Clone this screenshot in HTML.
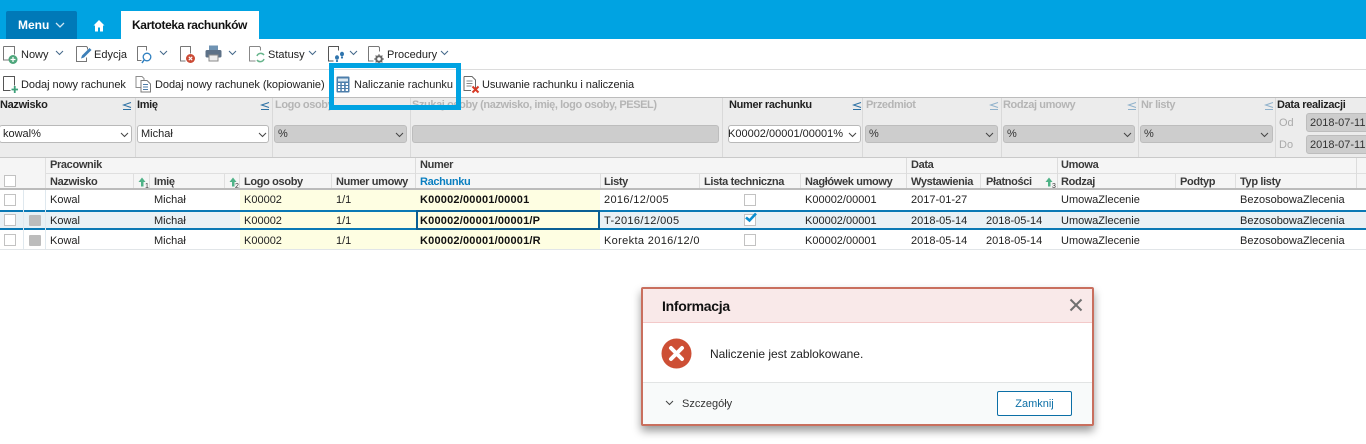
<!DOCTYPE html>
<html><head><meta charset="utf-8"><style>
html,body{margin:0;padding:0}
body{width:1366px;height:444px;overflow:hidden;background:#fff;position:relative;font-family:"Liberation Sans",sans-serif;font-size:11px;color:#222}
.a,.t,svg{position:absolute}
.t{white-space:nowrap;line-height:14px;height:14px}
.b{font-weight:bold}
.l{font-weight:bold;color:#222;letter-spacing:-.33px}
.r{font-weight:bold;color:#111;letter-spacing:.2px}
.h{font-weight:bold;color:#3a3a3a;letter-spacing:-.35px}
.g{font-weight:bold;color:#b5b5b5;letter-spacing:-.4px}
.n{letter-spacing:.35px}
.sub{font-size:7px;line-height:7px;height:7px;color:#333}
.s{position:absolute;height:16px;border:1px solid #b9b9b9;border-radius:3px;background:#fff;line-height:16px;white-space:nowrap;overflow:hidden;box-sizing:content-box;color:#222}
.s.d{background:#cdcdcd;border-color:#bdbdbd;color:#333}
.s span{position:absolute;left:3px;top:0}
.v{position:absolute;background:#d9d9d9;width:1px}
.c{position:absolute;width:10px;height:10px;border:1px solid #c2c2c2;background:#fff}
</style></head><body>
<!-- top bar -->
<div class="a" style="left:0;top:0;width:1366px;height:39px;background:#00a3e2"></div>
<div class="a" style="left:6px;top:11px;width:71px;height:28px;background:#0079b8;border-radius:2px 2px 0 0"></div>
<div class="t b" style="left:18px;top:18px;color:#fff;font-size:12px">Menu</div>
<svg style="left:55px;top:22px" width="10" height="6"><path d="M1 1l4 4 4-4" fill="none" stroke="#cfe6f3" stroke-width="1.3"/></svg>
<svg style="left:93px;top:19px" width="12" height="13"><path d="M6 1L0.500 6.500H2V12.500H5V8.500H7V12.500H10V6.500H11.500Z" fill="#fff"/></svg>
<div class="a" style="left:121px;top:11px;width:138px;height:28px;background:#fff"></div>
<div class="t b" style="left:132px;top:18px;color:#111;font-size:12px;letter-spacing:-.37px">Kartoteka rachunków</div>

<!-- toolbar 1 -->
<svg style="left:2px;top:44px" width="18" height="20"><path d="M1.500 2.500h11v8M1.500 2.500v13.500h6" fill="none" stroke="#777"/><circle cx="11" cy="15.500" r="4.500" fill="#4ea77c"/><path d="M8.500 15.500h5M11 13v5" stroke="#fff" stroke-width="1.200"/></svg>
<div class="t" style="left:21px;top:48px">Nowy</div>
<svg style="left:55px;top:50px" width="9" height="6"><path d="M1 1l3.500 3.500L8 1" fill="none" stroke="#44688a" stroke-width="1"/></svg>
<svg style="left:75px;top:44px" width="19" height="20"><path d="M1.500 2.500h10l1 1v2M1.500 2.500v15h10v-4" fill="none" stroke="#777"/><path d="M6 14.500l1-3 7.500-7.500 2 2L9 13.500z" fill="#3d7fb8"/></svg>
<div class="t" style="left:94px;top:48px">Edycja</div>
<svg style="left:136px;top:44px" width="18" height="20"><path d="M1.500 2.500h9v4M1.500 2.500v14h4" fill="none" stroke="#777"/><circle cx="11" cy="13" r="3.800" fill="none" stroke="#2e7fc0" stroke-width="1.300"/><path d="M8 16l-2 3" stroke="#2e7fc0" stroke-width="1.500"/></svg>
<svg style="left:159px;top:50px" width="9" height="6"><path d="M1 1l3.500 3.500L8 1" fill="none" stroke="#44688a"/></svg>
<svg style="left:180px;top:44px" width="17" height="20"><path d="M0.500 2.500h10v7M0.500 2.500v14.500h5" fill="none" stroke="#777"/><circle cx="10.500" cy="14.500" r="4.500" fill="#cb4a35"/><path d="M8.800 12.800l3.400 3.400M12.200 12.800l-3.400 3.400" stroke="#fff" stroke-width="1.100"/></svg>
<svg style="left:205px;top:45px" width="17" height="17"><rect x="4" y="0.500" width="9" height="5" fill="#6f93b3"/><rect x="0.500" y="5" width="16" height="7.500" rx="1.500" fill="#5d7187"/><rect x="4" y="10" width="9" height="6" fill="#eee" stroke="#8b8b8b"/></svg>
<svg style="left:228px;top:50px" width="9" height="6"><path d="M1 1l3.500 3.500L8 1" fill="none" stroke="#44688a"/></svg>
<svg style="left:249px;top:44px" width="19" height="20"><path d="M0.500 2.500h10l1 1v3M0.500 2.500v14.500h6" fill="none" stroke="#888"/><path d="M8 12a4 4 0 0 1 7-1M15 15a4 4 0 0 1-7 1" fill="none" stroke="#67b58c" stroke-width="1.500"/></svg>
<div class="t" style="left:268px;top:48px">Statusy</div>
<svg style="left:308px;top:50px" width="9" height="6"><path d="M1 1l3.500 3.500L8 1" fill="none" stroke="#44688a"/></svg>
<svg style="left:328px;top:44px" width="18" height="20"><path d="M0.500 2.500h10v4M0.500 2.500v14.500h5" fill="none" stroke="#555"/><ellipse cx="9" cy="13.500" rx="2" ry="2.300" fill="#2f74ad"/><ellipse cx="14" cy="10" rx="2" ry="2.300" fill="#2f74ad"/><circle cx="9" cy="17" r="1.100" fill="#2f74ad"/><circle cx="14" cy="13.500" r="1.100" fill="#2f74ad"/></svg>
<svg style="left:349px;top:50px" width="9" height="6"><path d="M1 1l3.500 3.500L8 1" fill="none" stroke="#44688a"/></svg>
<svg style="left:368px;top:44px" width="18" height="20"><path d="M0.500 2.500h10l1 1v4M0.500 2.500v14.500h5" fill="none" stroke="#777"/><circle cx="11" cy="15" r="2.800" fill="none" stroke="#666" stroke-width="2"/><path d="M11 10.200v2M11 17.800v2M6.200 15h2M13.800 15h2M7.600 11.600l1.400 1.400M13 17l1.400 1.400M14.400 11.600L13 13M9 17l-1.400 1.400" stroke="#666" stroke-width="1.200"/></svg>
<div class="t" style="left:387px;top:48px">Procedury</div>
<svg style="left:440px;top:50px" width="9" height="6"><path d="M1 1l3.500 3.500L8 1" fill="none" stroke="#44688a"/></svg>
<div class="a" style="left:0;top:69px;width:1366px;height:1px;background:#dcdcdc"></div>

<!-- toolbar 2 -->
<svg style="left:3px;top:75px" width="17" height="19"><path d="M0.500 1.500h11v9M0.500 1.500v14h7" fill="none" stroke="#555"/><path d="M8.500 14.500h6.500M11.750 11v7" stroke="#3ea07a" stroke-width="1.800"/></svg>
<div class="t" style="left:21px;top:78px;letter-spacing:-.05px">Dodaj nowy rachunek</div>
<svg style="left:135px;top:75px" width="17" height="18"><path d="M1 1.500h6l2 2v9H1z" fill="#fff" stroke="#8d8d8d"/><path d="M6 5.500h6l3.500 3.500v8H6z" fill="#fff" stroke="#7b7b7b"/><path d="M8 9.500h5M8 12h5M8 14.500h5" stroke="#4d7ca8"/></svg>
<div class="t" style="left:155px;top:78px;letter-spacing:-.05px">Dodaj nowy rachunek (kopiowanie)</div>
<svg style="left:336px;top:76px" width="14" height="17"><rect x="0.500" y="0.500" width="13" height="16" rx="1" fill="#4d7eab"/><rect x="2" y="2.500" width="10" height="3" fill="#dce8f1"/><path d="M2 7h2.300v2H2zM5.800 7h2.300v2H5.800zM9.700 7H12v2H9.700zM2 10h2.300v2H2zM5.800 10h2.300v2H5.800zM9.700 10H12v2H9.700zM2 13h2.300v2H2zM5.800 13h2.300v2H5.800zM9.700 13H12v2H9.700z" fill="#fff"/></svg>
<div class="t" style="left:354px;top:78px">Naliczanie rachunku</div>
<svg style="left:463px;top:75px" width="17" height="19"><path d="M1 1.500h8l3.500 3.500v8M1 1.500v14h7" fill="none" stroke="#6b6b6b"/><path d="M3.500 6h6M3.500 8.500h6M3.500 11h5" stroke="#888"/><path d="M9.500 11.500l6 6M15.500 11.500l-6 6" stroke="#d83a25" stroke-width="2"/></svg>
<div class="t" style="left:482px;top:78px;letter-spacing:-.07px">Usuwanie rachunku i naliczenia</div>

<!-- filter panel -->
<div class="a" style="left:0;top:97px;width:1366px;height:60px;background:#ececec;border-top:1px solid #bcbcbc;box-sizing:border-box"></div>
<div class="v" style="left:135px;top:98px;height:59px"></div>
<div class="v" style="left:272px;top:98px;height:59px"></div>
<div class="v" style="left:410px;top:98px;height:59px"></div>
<div class="v" style="left:722px;top:98px;height:59px"></div>
<div class="v" style="left:862px;top:98px;height:59px"></div>
<div class="v" style="left:1001px;top:98px;height:59px"></div>
<div class="v" style="left:1138px;top:98px;height:59px"></div>
<div class="v" style="left:1275px;top:98px;height:59px"></div>
<div class="t l" style="left:0;top:98px">Nazwisko</div>
<div class="t l" style="left:137px;top:98px">Imię</div>
<div class="t g" style="left:275px;top:98px">Logo osoby</div>
<div class="t g" style="left:412px;top:98px">Szukaj osoby (nazwisko, imię, logo osoby, PESEL)</div>
<div class="t l" style="left:729px;top:98px">Numer rachunku</div>
<div class="t g" style="left:866px;top:98px">Przedmiot</div>
<div class="t g" style="left:1003px;top:98px">Rodzaj umowy</div>
<div class="t g" style="left:1141px;top:98px">Nr listy</div>
<div class="t l" style="left:1277px;top:98px">Data realizacji</div>
<svg style="left:122px;top:102px" width="10" height="9"><path d="M9 0.500L1.500 3 9 5.500M1 7.500h8" fill="none" stroke="#2a6fa3"/></svg>
<svg style="left:260px;top:102px" width="10" height="9"><path d="M9 0.500L1.500 3 9 5.500M1 7.500h8" fill="none" stroke="#2a6fa3"/></svg>
<svg style="left:852px;top:102px" width="10" height="9"><path d="M9 0.500L1.500 3 9 5.500M1 7.500h8" fill="none" stroke="#2a6fa3"/></svg>
<svg style="left:989px;top:102px" width="10" height="9"><path d="M9 0.500L1.500 3 9 5.500M1 7.500h8" fill="none" stroke="#8fb1cb"/></svg>
<svg style="left:1127px;top:102px" width="10" height="9"><path d="M9 0.500L1.500 3 9 5.500M1 7.500h8" fill="none" stroke="#8fb1cb"/></svg>
<svg style="left:1264px;top:102px" width="10" height="9"><path d="M9 0.500L1.500 3 9 5.500M1 7.500h8" fill="none" stroke="#8fb1cb"/></svg>

<div class="s" style="left:-1px;top:125px;width:131px"><span>kowal%</span></div>
<div class="s" style="left:137px;top:125px;width:130px"><span>Michał</span></div>
<div class="s d" style="left:274px;top:125px;width:131px"><span>%</span></div>
<div class="s d" style="left:412px;top:125px;width:305px"></div>
<div class="s" style="left:728px;top:125px;width:131px"><span style="left:-1px">K00002/00001/00001%</span></div>
<div class="s d" style="left:865px;top:125px;width:131px"><span>%</span></div>
<div class="s d" style="left:1003px;top:125px;width:130px"><span>%</span></div>
<div class="s d" style="left:1140px;top:125px;width:131px"><span>%</span></div>
<svg style="left:120px;top:132px" width="9" height="6"><path d="M1 1l3.500 3.500L8 1" fill="none" stroke="#444"/></svg>
<svg style="left:258px;top:132px" width="9" height="6"><path d="M1 1l3.500 3.500L8 1" fill="none" stroke="#444"/></svg>
<svg style="left:395px;top:132px" width="9" height="6"><path d="M1 1l3.500 3.500L8 1" fill="none" stroke="#444"/></svg>
<svg style="left:848px;top:132px" width="9" height="6"><path d="M1 1l3.500 3.500L8 1" fill="none" stroke="#444"/></svg>
<svg style="left:985px;top:132px" width="9" height="6"><path d="M1 1l3.500 3.500L8 1" fill="none" stroke="#444"/></svg>
<svg style="left:1123px;top:132px" width="9" height="6"><path d="M1 1l3.500 3.500L8 1" fill="none" stroke="#444"/></svg>
<svg style="left:1260px;top:132px" width="9" height="6"><path d="M1 1l3.500 3.500L8 1" fill="none" stroke="#444"/></svg>
<div class="t" style="left:1279px;top:116px;color:#aaa">Od</div>
<div class="t" style="left:1279px;top:138px;color:#aaa">Do</div>
<div class="s d" style="left:1306px;top:113px;width:70px;height:17px;line-height:18px"><span>2018-07-11</span></div>
<div class="s d" style="left:1306px;top:135px;width:70px;height:17px;line-height:18px"><span>2018-07-11</span></div>

<!-- table header -->
<div class="a" style="left:0;top:157px;width:1366px;height:32px;background:#f5f5f5;border-top:1px solid #c9c9c9;box-sizing:border-box"></div>
<div class="a" style="left:45px;top:173px;width:1321px;height:1px;background:#dfdfdf"></div>
<div class="a" style="left:0;top:188px;width:1366px;height:2px;background:#bbb"></div>
<div class="v" style="left:45px;top:158px;height:30px;background:#e0e0e0"></div>
<div class="v" style="left:415px;top:158px;height:30px;background:#dcdcdc"></div>
<div class="v" style="left:906px;top:158px;height:30px;background:#dcdcdc"></div>
<div class="v" style="left:1057px;top:158px;height:30px;background:#dcdcdc"></div>
<div class="v" style="left:1356px;top:158px;height:30px;background:#dcdcdc"></div>
<div class="v" style="left:133px;top:174px;height:14px;background:#dfdfdf"></div>
<div class="v" style="left:149px;top:174px;height:14px;background:#dfdfdf"></div>
<div class="v" style="left:224px;top:174px;height:14px;background:#dfdfdf"></div>
<div class="v" style="left:239px;top:174px;height:14px;background:#dfdfdf"></div>
<div class="v" style="left:331px;top:174px;height:14px;background:#dfdfdf"></div>
<div class="v" style="left:600px;top:174px;height:14px;background:#dfdfdf"></div>
<div class="v" style="left:699px;top:174px;height:14px;background:#dfdfdf"></div>
<div class="v" style="left:800px;top:174px;height:14px;background:#dfdfdf"></div>
<div class="v" style="left:980px;top:174px;height:14px;background:#dfdfdf"></div>
<div class="v" style="left:1175px;top:174px;height:14px;background:#dfdfdf"></div>
<div class="v" style="left:1235px;top:174px;height:14px;background:#dfdfdf"></div>
<div class="t h" style="left:50px;top:158px">Pracownik</div>
<div class="t h" style="left:420px;top:158px">Numer</div>
<div class="t h" style="left:911px;top:158px">Data</div>
<div class="t h" style="left:1061px;top:158px">Umowa</div>
<div class="t h" style="left:50px;top:175px">Nazwisko</div>
<div class="t h" style="left:154px;top:175px">Imię</div>
<div class="t h" style="left:244px;top:175px">Logo osoby</div>
<div class="t h" style="left:336px;top:175px">Numer umowy</div>
<div class="t h" style="left:420px;top:175px;color:#0a7fc0">Rachunku</div>
<div class="t h" style="left:604px;top:175px">Listy</div>
<div class="t h" style="left:704px;top:175px">Lista techniczna</div>
<div class="t h" style="left:805px;top:175px">Nagłówek umowy</div>
<div class="t h" style="left:911px;top:175px">Wystawienia</div>
<div class="t h" style="left:986px;top:175px">Płatności</div>
<div class="t h" style="left:1061px;top:175px">Rodzaj</div>
<div class="t h" style="left:1180px;top:175px">Podtyp</div>
<div class="t h" style="left:1240px;top:175px">Typ listy</div>
<svg style="left:138px;top:177px" width="9" height="10"><path d="M3 9.500V5H0.500L4 0.500 7.500 5H5.500v4.500z" fill="#4fb287"/></svg>
<div class="t sub" style="left:145px;top:183px">1</div>
<svg style="left:229px;top:177px" width="9" height="10"><path d="M3 9.500V5H0.500L4 0.500 7.500 5H5.500v4.500z" fill="#4fb287"/></svg>
<div class="t sub" style="left:235px;top:183px">2</div>
<svg style="left:1045px;top:177px" width="9" height="10"><path d="M3 9.500V5H0.500L4 0.500 7.500 5H5.500v4.500z" fill="#4fb287"/></svg>
<div class="t sub" style="left:1052px;top:183px">3</div>
<div class="c" style="left:4px;top:175px"></div>

<!-- rows -->
<div class="a" style="left:240px;top:190px;width:360px;height:59px;background:#fefee2"></div>
<div class="a" style="left:0;top:210px;width:1366px;height:20px;background:#e9f1f5"></div>
<div class="a" style="left:240px;top:210px;width:360px;height:20px;background:#fefee2"></div>
<div class="a" style="left:0;top:249px;width:1366px;height:1px;background:#e1e5e8"></div>
<div class="a" style="left:0;top:210px;width:1366px;height:2px;background:#0a79b5"></div>
<div class="a" style="left:0;top:228px;width:1366px;height:2px;background:#0a79b5"></div>
<div class="a" style="left:416px;top:210px;width:184px;height:20px;border:2px solid #0a5f94;box-sizing:border-box;background:#fefee2"></div>
<div class="v" style="left:23px;top:190px;height:59px;background:#dfe8ee"></div>
<div class="v" style="left:45px;top:190px;height:59px;background:#dfe8ee"></div>

<div class="c" style="left:4px;top:194px"></div>
<div class="c" style="left:4px;top:214px"></div>
<div class="c" style="left:4px;top:234px"></div>
<div class="a" style="left:29px;top:215px;width:12px;height:11px;background:#bcbcbc;border-radius:1px"></div>
<div class="a" style="left:29px;top:235px;width:12px;height:11px;background:#bcbcbc;border-radius:1px"></div>

<div class="t" style="left:50px;top:193px">Kowal</div><div class="t" style="left:154px;top:193px">Michał</div><div class="t" style="left:244px;top:193px">K00002</div><div class="t" style="left:336px;top:193px">1/1</div><div class="t r" style="left:420px;top:193px">K00002/00001/00001</div><div class="t n" style="left:604px;top:193px">2016/12/005</div><div class="t" style="left:805px;top:193px">K00002/00001</div><div class="t" style="left:911px;top:193px">2017-01-27</div><div class="t" style="left:1061px;top:193px">UmowaZlecenie</div><div class="t" style="left:1240px;top:193px">BezosobowaZlecenia</div>
<div class="t" style="left:50px;top:214px">Kowal</div><div class="t" style="left:154px;top:214px">Michał</div><div class="t" style="left:244px;top:214px">K00002</div><div class="t" style="left:336px;top:214px">1/1</div><div class="t r" style="left:420px;top:214px">K00002/00001/00001/P</div><div class="t n" style="left:604px;top:214px">T-2016/12/005</div><div class="t" style="left:805px;top:214px">K00002/00001</div><div class="t" style="left:911px;top:214px">2018-05-14</div><div class="t" style="left:986px;top:214px">2018-05-14</div><div class="t" style="left:1061px;top:214px">UmowaZlecenie</div><div class="t" style="left:1240px;top:214px">BezosobowaZlecenia</div>
<div class="t" style="left:50px;top:234px">Kowal</div><div class="t" style="left:154px;top:234px">Michał</div><div class="t" style="left:244px;top:234px">K00002</div><div class="t" style="left:336px;top:234px">1/1</div><div class="t r" style="left:420px;top:234px">K00002/00001/00001/R</div><div class="t n" style="left:604px;top:234px">Korekta 2016/12/0</div><div class="t" style="left:805px;top:234px">K00002/00001</div><div class="t" style="left:911px;top:234px">2018-05-14</div><div class="t" style="left:986px;top:234px">2018-05-14</div><div class="t" style="left:1061px;top:234px">UmowaZlecenie</div><div class="t" style="left:1240px;top:234px">BezosobowaZlecenia</div>
<div class="c" style="left:744px;top:194px"></div>
<div class="c" style="left:744px;top:214px"></div>
<div class="c" style="left:744px;top:234px"></div>
<svg style="left:744px;top:212px" width="14" height="12"><path d="M2 5.500l3.500 3L12 1.500" fill="none" stroke="#0a8fd0" stroke-width="2.600"/></svg>

<!-- highlight box -->
<div class="a" style="left:329px;top:63px;width:132px;height:47px;border:5px solid #00a3e2;box-sizing:border-box"></div>

<!-- dialog -->
<div class="a" style="left:641px;top:287px;width:453px;height:139px;border:2px solid #c96f5e;box-sizing:border-box;border-radius:2px;background:#fff;box-shadow:0 5px 9px rgba(0,0,0,.4)"></div>
<div class="a" style="left:643px;top:289px;width:449px;height:33px;background:#f9e9e9;border-bottom:1px solid #f3c9c9"></div>
<div class="a" style="left:643px;top:382px;width:449px;height:42px;background:#f8fafa;border-top:1px solid #e2e4e4;box-sizing:border-box"></div>
<div class="t b" style="left:662px;top:298px;font-size:14px;line-height:16px;height:16px;color:#111;letter-spacing:-.3px">Informacja</div>
<svg style="left:1069px;top:298px" width="14" height="14"><path d="M1.500 1.500l11 11M12.500 1.500l-11 11" stroke="#707070" stroke-width="2"/></svg>
<svg style="left:661px;top:338px" width="31" height="31"><circle cx="15.500" cy="15.500" r="15" fill="#cd4f35"/><path d="M10 10l11 11M21 10l-11 11" stroke="#fff" stroke-width="4" stroke-linecap="round"/></svg>
<div class="t" style="left:710px;top:347px;color:#222;font-size:12px;letter-spacing:-.03px">Naliczenie jest zablokowane.</div>
<svg style="left:665px;top:400px" width="9" height="6"><path d="M1 1l3.500 3.500L8 1" fill="none" stroke="#444"/></svg>
<div class="t" style="left:682px;top:397px;color:#333">Szczegóły</div>
<div class="a" style="left:997px;top:391px;width:75px;height:25px;border:1px solid #0c6fa6;border-radius:2px;background:#fff;box-sizing:border-box;text-align:center;line-height:24px;color:#0c6fa6">Zamknij</div>
</body></html>
